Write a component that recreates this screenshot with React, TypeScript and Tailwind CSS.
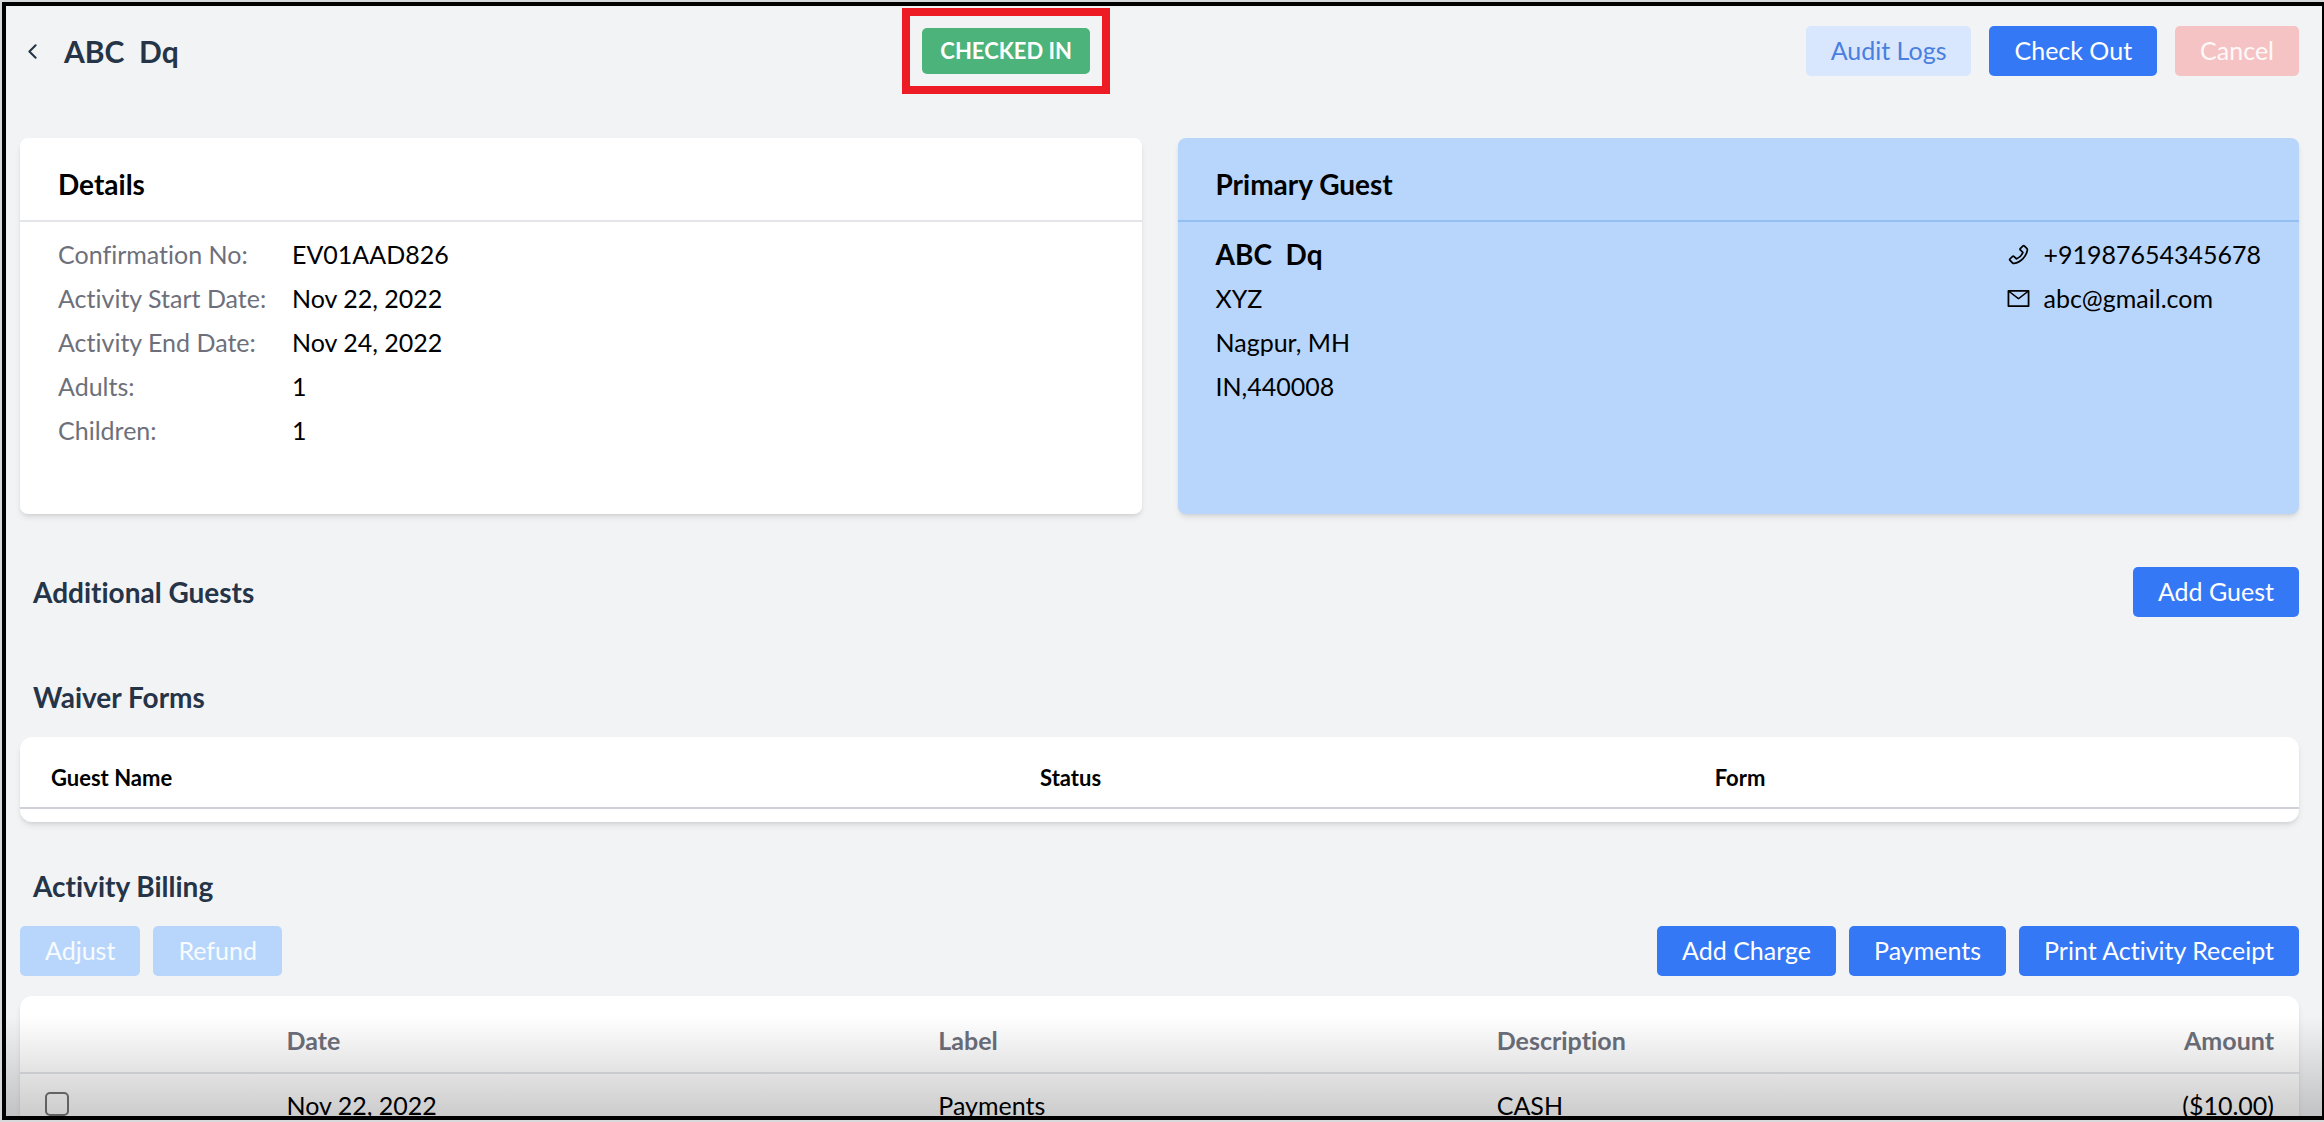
import { ReactNode } from "react";
import { clsx } from "clsx";
import { AiOutlineMail, AiOutlinePhone } from "react-icons/ai";
import { FiChevronLeft } from "react-icons/fi";

interface Charge {
  date: string;
  label: string;
  description: string;
  amount: string;
}

type Variant = "primary" | "soft" | "muted" | "danger";

const details = [
  { label: "Confirmation No:", value: "EV01AAD826" },
  { label: "Activity Start Date:", value: "Nov 22, 2022" },
  { label: "Activity End Date:", value: "Nov 24, 2022" },
  { label: "Adults:", value: "1" },
  { label: "Children:", value: "1" },
];

const address = ["XYZ", "Nagpur, MH", "IN,440008"];

const charges: Charge[] = [
  { date: "Nov 22, 2022", label: "Payments", description: "CASH", amount: "($10.00)" },
];

const variants: Record<Variant, string> = {
  primary: "bg-[#3478f6] text-white",
  soft: "bg-[#d8e7fd] text-[#4a7fe0]",
  muted: "bg-[#b8d6fb] text-white/90",
  danger: "bg-[#f5c3c3] text-white/90",
};

function Button({ variant = "primary", disabled, children }: { variant?: Variant; disabled?: boolean; children: ReactNode }) {
  return (
    <button
      type="button"
      disabled={disabled}
      className={clsx("h-[50px] px-[25px] rounded-[5px] text-[25px] whitespace-nowrap", variants[variant])}
    >
      {children}
    </button>
  );
}

function SectionTitle({ children }: { children: ReactNode }) {
  return <h2 className="pl-[13px] text-[28px] leading-9 font-bold text-[#253447]">{children}</h2>;
}

export default function App() {
  return (
    <div className="h-screen bg-[#d8d9db] pt-0.5 pb-0.5 pl-0.5 font-[Lato,sans-serif] text-[25px] text-black [font-variant-ligatures:none]">
      <div className="relative h-full overflow-hidden border-4 border-r-2 border-black bg-[#f2f3f5]">
        <main className="pt-5 pl-3.5 pr-[23px]">
          <header className="flex items-center justify-between">
            <div className="flex items-center pr-7">
              <a href="#" aria-label="Back" className="w-11">
                <FiChevronLeft className="h-[25px] w-[25px] text-[#253447]" />
              </a>
              <h1 className="text-[30px] leading-10 font-bold whitespace-pre text-[#253447]">ABC  Dq</h1>
            </div>

            <div className="relative">
              <span className="block h-[46px] rounded-[5px] bg-[#4cb37a] px-[18px] text-[22px] leading-[46px] font-bold text-white">
                CHECKED IN
              </span>
              <div className="absolute -inset-5 border-8 border-[#ed1c24]" />
            </div>

            <div className="flex gap-[18px]">
              <Button variant="soft">Audit Logs</Button>
              <Button>Check Out</Button>
              <Button variant="danger" disabled>Cancel</Button>
            </div>
          </header>

          <div className="mt-[62px] grid grid-cols-2 gap-9">
            <section className="rounded-lg bg-white pb-[62px] shadow-md">
              <h2 className="border-b-2 border-[#e4e5e8] px-[38px] pt-[29px] pb-[19px] text-[28px] leading-[34px] font-bold">Details</h2>
              <dl className="px-[38px] pt-2.5 leading-[44px]">
                {details.map((item) => (
                  <div key={item.label} className="flex">
                    <dt className="w-[234px] text-[#6d707b]">{item.label}</dt>
                    <dd>{item.value}</dd>
                  </div>
                ))}
              </dl>
            </section>

            <section className="rounded-lg bg-[#b8d6fb] shadow-md">
              <h2 className="border-b-2 border-[#94bff1] px-[38px] pt-[29px] pb-[19px] text-[28px] leading-[34px] font-bold">Primary Guest</h2>
              <div className="flex justify-between px-[38px] pt-2.5 leading-[44px]">
                <div>
                  <h3 className="text-[28px] font-bold whitespace-pre">ABC  Dq</h3>
                  {address.map((line) => (
                    <p key={line}>{line}</p>
                  ))}
                </div>
                <div>
                  <p className="flex items-center gap-3">
                    <AiOutlinePhone className="h-[25px] w-[25px]" />
                    +91987654345678
                  </p>
                  <p className="flex items-center gap-3">
                    <AiOutlineMail className="h-[25px] w-[25px]" />
                    abc@gmail.com
                  </p>
                </div>
              </div>
            </section>
          </div>

          <div className="mt-[53px] flex items-center justify-between">
            <SectionTitle>Additional Guests</SectionTitle>
            <Button>Add Guest</Button>
          </div>

          <section className="mt-[62px]">
            <SectionTitle>Waiver Forms</SectionTitle>
            <div className="mt-[22px] rounded-xl bg-white pb-[13px] shadow-md">
              <table className="w-full table-fixed border-collapse text-left text-[22px]">
                <thead>
                  <tr className="h-[71px] border-b-2 border-[#d0d1d6]">
                    <th className="w-[43.4%] px-[31px] pt-2.5 font-bold">Guest Name</th>
                    <th className="w-[29.6%] px-[31px] pt-2.5 font-bold">Status</th>
                    <th className="px-[31px] pt-2.5 font-bold">Form</th>
                  </tr>
                </thead>
              </table>
            </div>
          </section>

          <section className="mt-[46px]">
            <SectionTitle>Activity Billing</SectionTitle>
            <div className="mt-[22px] flex justify-between">
              <div className="flex gap-[13px]">
                <Button variant="muted" disabled>Adjust</Button>
                <Button variant="muted" disabled>Refund</Button>
              </div>
              <div className="flex gap-[13px]">
                <Button>Add Charge</Button>
                <Button>Payments</Button>
                <Button>Print Activity Receipt</Button>
              </div>
            </div>

            <div className="mt-5 rounded-xl bg-white shadow-md">
              <table className="w-full table-fixed border-collapse text-left">
                <thead>
                  <tr className="h-[77px] border-b-2 border-[#e4e5e8] text-[#6d707b]">
                    <th className="w-[10.6%]" />
                    <th className="w-[28.6%] px-[25px] pt-3.5 font-bold">Date</th>
                    <th className="w-[24.5%] px-[25px] pt-3.5 font-bold">Label</th>
                    <th className="px-[25px] pt-3.5 font-bold">Description</th>
                    <th className="px-[25px] pt-3.5 text-right font-bold">Amount</th>
                  </tr>
                </thead>
                <tbody>
                  {charges.map((charge) => (
                    <tr key={charge.date} className="h-[65px]">
                      <td className="px-[25px]">
                        <input
                          type="checkbox"
                          aria-label="Select charge"
                          className="mb-1 block h-6 w-6 appearance-none rounded-[5px] border-2 border-[#767676] bg-white"
                        />
                      </td>
                      <td className="px-[25px]">{charge.date}</td>
                      <td className="px-[25px]">{charge.label}</td>
                      <td className="px-[25px]">{charge.description}</td>
                      <td className="px-[25px] text-right">{charge.amount}</td>
                    </tr>
                  ))}
                </tbody>
              </table>
            </div>
          </section>
        </main>

        {/* fade at the bottom edge of the page */}
        <div className="pointer-events-none absolute inset-x-0 bottom-0 h-[100px] bg-linear-to-b from-black/0 to-black/20" />
      </div>
    </div>
  );
}
